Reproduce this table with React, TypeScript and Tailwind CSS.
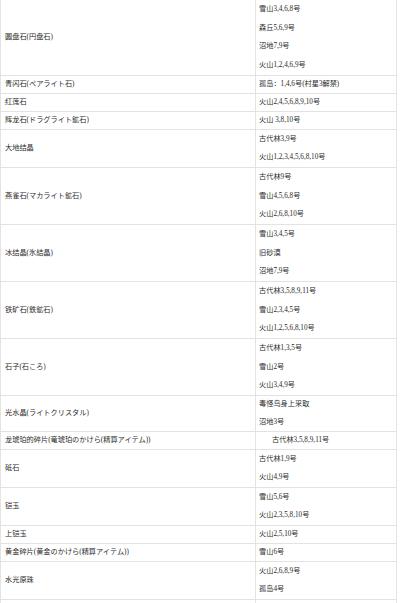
import React from "react";

type Row = { l: string; r: string[]; indent?: boolean; h?: string };

const rows: Row[] = [
  { l: "圆盘石(円盘石)", r: ["雪山3,4,6,8号", "森丘5,6,9号", "沼地7,9号", "火山1,2,4,6,9号"] },
  { l: "青闪石(ペアライト石)", r: ["孤岛：1,4,6号(村星3解禁)"] },
  { l: "红莲石", r: ["火山2,4,5,6,8,9,10号"] },
  { l: "辉龙石(ドラグライト鉱石)", r: ["火山 3,8,10号"] },
  { l: "大地结晶", r: ["古代林3,9号", "火山1,2,3,4,5,6,8,10号"] },
  { l: "燕雀石(マカライト鉱石)", r: ["古代林9号", "雪山4,5,6,8号", "火山2,6,8,10号"] },
  { l: "冰结晶(氷結晶)", r: ["雪山3,4,5号", "旧砂漠", "沼地7,9号"] },
  { l: "铁矿石(鉄鉱石)", r: ["古代林3,5,8,9,11号", "雪山2,3,4,5号", "火山1,2,5,6,8,10号"] },
  { l: "石子(石ころ)", r: ["古代林1,3,5号", "雪山2号", "火山3,4,9号"] },
  { l: "光水晶(ライトクリスタル)", r: ["毒怪鸟身上采取", "沼地3号"], h: "h-[36px]" },
  { l: "龙琥珀的碎片(竜琥珀のかけら(精算アイテム))", r: ["古代林3,5,8,9,11号"], indent: true },
  { l: "砥石", r: ["古代林1,9号", "火山4,9号"] },
  { l: "铠玉", r: ["雪山5,6号", "火山2,3,5,8,10号"] },
  { l: "上铠玉", r: ["火山2,5,10号"] },
  { l: "黄金碎片(黄金のかけら(精算アイテム))", r: ["雪山6号"] },
  { l: "水光原珠", r: ["火山2,6,8,9号", "孤岛4号"] },
  { l: "", r: [""] },
];

const heightClass: Record<number, string> = {
  1: "h-[18px]",
  2: "h-[38px]",
  3: "h-[57px]",
  4: "h-[76px]",
};

export default function App() {
  return (
    <div
      className="w-[400px] h-[603px] overflow-hidden bg-white text-[#2a2a2a] text-[7.2px]"
      style={{ fontFamily: '"Liberation Serif", "Noto Sans CJK SC", serif' }}
    >
      <div className="w-[397px] border-l border-[#e3e3e3]">
        {rows.map((row, i) => (
          <div key={i} className={`flex border-b border-[#e3e3e3] ${row.h ?? heightClass[row.r.length]}`}>
            <div className="w-[255px] shrink-0 flex items-center pl-[4px] border-r border-[#e3e3e3]">
              <span>{row.l}</span>
            </div>
            <div className="flex-1 flex flex-col border-r border-[#e3e3e3]">
              {row.r.map((t, j) => (
                <div
                  key={j}
                  className={`flex-1 flex items-center ${row.indent ? "pl-[16px]" : "pl-[3px]"} whitespace-nowrap`}
                >
                  {t}
                </div>
              ))}
            </div>
          </div>
        ))}
      </div>
    </div>
  );
}
